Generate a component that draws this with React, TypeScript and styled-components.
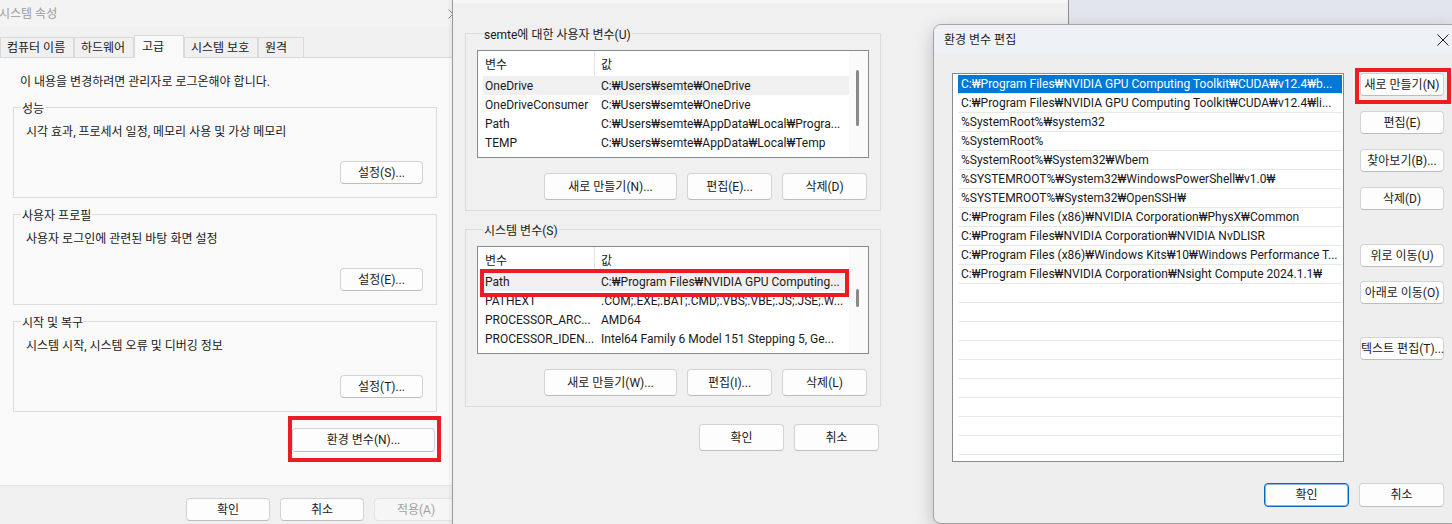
import React from 'react';
import styled, { createGlobalStyle } from 'styled-components';

const GlobalStyle = createGlobalStyle`
  html, body {
    margin: 0;
    padding: 0;
  }
  body {
    font-family: Roboto, "Noto Sans CJK KR", sans-serif;
    font-size: 12px;
    color: #1a1a1a;
  }
  * {
    box-sizing: border-box;
  }
`;

// desktop canvas that holds the three overlapping dialogs
const Desktop = styled.div`
  position: relative;
  width: 1452px;
  height: 524px;
  overflow: hidden;
  background: linear-gradient(180deg, #e2e5ed 0%, #e8eaf0 100%);
`;

const Win = styled.div<{ $x: number; $y: number; $w: number; $h: number; $z: number }>`
  position: absolute;
  left: ${(p) => p.$x}px;
  top: ${(p) => p.$y}px;
  width: ${(p) => p.$w}px;
  height: ${(p) => p.$h}px;
  z-index: ${(p) => p.$z};
  display: flex;
  flex-direction: column;
  overflow: hidden;
`;

const Btn = styled.button<{ $w: number; $h?: number; $primary?: boolean }>`
  flex: none;
  width: ${(p) => p.$w}px;
  height: ${(p) => p.$h ?? 23}px;
  padding: 0;
  font: inherit;
  line-height: 1;
  white-space: nowrap;
  color: #1b1b1b;
  background: #fdfdfd;
  border: 1px solid ${(p) => (p.$primary ? '#0067c0' : '#d3d3d3')};
  border-bottom-color: ${(p) => (p.$primary ? '#0067c0' : '#bdbdbd')};
  box-shadow: ${(p) => (p.$primary ? 'inset 0 0 0 1px rgba(0, 103, 192, 0.45)' : 'none')};
  border-radius: 4px;

  &:disabled {
    color: #a2a2a2;
    background: #f6f6f6;
    border-color: #e2e2e2;
  }
`;

// red annotation frame drawn over a control
const Highlight = styled.span<{ $t: number; $r: number; $b: number; $l: number }>`
  position: absolute;
  top: ${(p) => p.$t}px;
  right: ${(p) => p.$r}px;
  bottom: ${(p) => p.$b}px;
  left: ${(p) => p.$l}px;
  border: 4px solid #ed1c24;
  pointer-events: none;
  z-index: 5;
`;

const Marked = styled.div<{ $mt?: number; $ml?: number }>`
  position: relative;
  flex: none;
  display: flex;
  margin-top: ${(p) => p.$mt ?? 0}px;
  margin-left: ${(p) => p.$ml ?? 0}px;
`;

const CloseIcon = ({ size, color }: { size: number; color: string }) => (
  <svg width={size} height={size} viewBox={`0 0 ${size} ${size}`} fill="none">
    <path d={`M0.5 0.5L${size - 0.5} ${size - 0.5}M${size - 0.5} 0.5L0.5 ${size - 0.5}`} stroke={color} strokeWidth="1" />
  </svg>
);

/* ---------- 시스템 속성 ---------- */

const PropsWindow = styled(Win)`
  background: #f0f0f0;
`;

const PropsTitleBar = styled.div`
  flex: none;
  height: 27px;
  display: flex;
  align-items: center;
  justify-content: space-between;
  padding: 0 18px 0 0;
  background: #f3f3f3;
  color: #9c9c9c;

  & > span {
    margin-left: -1px;
    line-height: 16px;
  }
`;

const TabStrip = styled.div`
  flex: none;
  height: 30px;
  display: flex;
  align-items: flex-end;
  background: #f0f0f0;
`;

const Tab = styled.div<{ $w: number; $active?: boolean }>`
  position: relative;
  z-index: ${(p) => (p.$active ? 2 : 1)};
  width: ${(p) => p.$w}px;
  height: ${(p) => (p.$active ? 23 : 20)}px;
  margin-bottom: ${(p) => (p.$active ? -1 : 0)}px;
  padding: ${(p) => (p.$active ? '3px 0 0 7px' : '2px 0 0 6px')};
  border: 1px solid #d9d9d9;
  border-bottom: none;
  background: ${(p) => (p.$active ? '#f9f9f9' : '#f0f0f0')};
  line-height: 16px;
  white-space: nowrap;
`;

const TabPanel = styled.div`
  flex: none;
  height: 428px;
  display: flex;
  flex-direction: column;
  align-items: flex-start;
  padding-left: 13px;
  background: #f9f9f9;
  border-top: 1px solid #d9d9d9;
`;

const Notice = styled.div`
  margin: 16px 0 0 7px;
  line-height: 16px;
`;

const Group = styled.div<{ $mt: number }>`
  flex: none;
  display: flex;
  flex-direction: column;
  margin-top: ${(p) => p.$mt}px;
  border: 1px solid #dcdcdc;
  background: inherit;
`;

const SettingsGroup = styled(Group)`
  width: 424px;
  height: 91px;
  padding: 0 13px 0 0;
`;

const GroupLabel = styled.span<{ $ml: number }>`
  align-self: flex-start;
  margin: -9px 0 0 ${(p) => p.$ml}px;
  padding: 2px 1px 0;
  line-height: 16px;
  background: inherit;
  white-space: nowrap;
`;

const GroupText = styled.div`
  margin: 7px 0 0 12px;
  line-height: 16px;
`;

const GroupButton = styled(Btn)`
  align-self: flex-end;
  margin-top: 21px;
`;

const PropsFooter = styled.div`
  flex: 1;
  display: flex;
  gap: 10px;
  padding: 12px 0 0 186px;
  border-top: 1px solid #e3e3e3;
  background: #f0f0f0;
`;

/* ---------- 환경 변수 ---------- */

const EnvWindow = styled(Win)`
  background: #f0f0f0;
  border-left: 1px solid #9b9b9b;
  border-right: 1px solid #8e8e8e;
  box-shadow: -2px 0 4px rgba(0, 0, 0, 0.06);
`;

const EnvTitleBar = styled.div`
  flex: none;
  height: 30px;
  background: #f6f6f6;
`;

const EnvBody = styled.div`
  display: flex;
  flex-direction: column;
  padding: 30px 0 0 12px;
  background: inherit;
`;

const VarGroup = styled(Group)`
  width: 416px;
  padding: 0 11px 10px 11px;
`;

const ListBox = styled.div<{ $mt: number }>`
  flex: none;
  width: 392px;
  height: 108px;
  margin-top: ${(p) => p.$mt}px;
  display: flex;
  border: 1px solid #868a91;
  background: #ffffff;
  overflow: hidden;
`;

const ListMain = styled.div`
  flex: 1;
  display: flex;
  flex-direction: column;
  padding-left: 5px;
`;

const ListHeader = styled.div`
  flex: none;
  height: 25px;
  display: grid;
  grid-template-columns: 111px 1fr;
  align-items: stretch;
`;

const HeadCell = styled.div<{ $first?: boolean }>`
  display: flex;
  align-items: center;
  padding-left: ${(p) => (p.$first ? 2 : 6)}px;
  border-left: ${(p) => (p.$first ? 'none' : '1px solid #e5e5e5')};
`;

const ListRow = styled.div<{ $sel?: boolean }>`
  position: relative;
  flex: none;
  height: 19px;
  display: grid;
  grid-template-columns: 111px 1fr;
  background: ${(p) => (p.$sel ? '#f0f0f0' : 'transparent')};
`;

const Cell = styled.div<{ $first?: boolean }>`
  padding: 1px 0 0 ${(p) => (p.$first ? 2 : 7)}px;
  line-height: 18px;
  white-space: nowrap;
  overflow: hidden;
`;

const ScrollTrack = styled.div`
  flex: none;
  width: 19px;
  background: #fafafa;
  padding-left: 7px;
`;

const ScrollThumb = styled.div<{ $top: number; $len: number }>`
  width: 3px;
  height: ${(p) => p.$len}px;
  margin-top: ${(p) => p.$top}px;
  border-radius: 2px;
  background: #8a8a8a;
`;

const ButtonRow = styled.div<{ $mt: number; $pr: number }>`
  flex: none;
  display: flex;
  justify-content: flex-end;
  gap: 10px;
  margin-top: ${(p) => p.$mt}px;
  padding-right: ${(p) => p.$pr}px;
`;

const EnvFooter = styled(ButtonRow)`
  width: 416px;
`;

/* ---------- 환경 변수 편집 ---------- */

const EditWindow = styled(Win)`
  background: #eeeeee;
  border: 1px solid #a3a3a3;
  border-radius: 8px;
  box-shadow: 0 6px 18px rgba(0, 0, 0, 0.22);
`;

const EditTitleBar = styled.div`
  flex: none;
  height: 28px;
  display: flex;
  align-items: center;
  justify-content: space-between;
  padding: 1px 9px 0 10px;
  background: #eef2f7;
  line-height: 16px;
`;

const EditBody = styled.div`
  flex: 1;
  display: flex;
  flex-direction: column;
  padding: 20px 14px 0 18px;
`;

const EditTop = styled.div`
  display: flex;
  gap: 16px;
`;

const PathList = styled.div`
  flex: none;
  width: 392px;
  height: 389px;
  padding: 1px 1px 0 5px;
  border: 1px solid #868a91;
  background: #ffffff;
  overflow: hidden;
`;

const PathRow = styled.div<{ $sel?: boolean }>`
  height: 19px;
  padding: 1px 0 0 3px;
  line-height: 17px;
  border-bottom: 1px solid #e8e8e8;
  white-space: nowrap;
  overflow: hidden;
  color: ${(p) => (p.$sel ? '#ffffff' : '#1a1a1a')};
  background: ${(p) => (p.$sel ? '#0078d7' : 'transparent')};
`;

const SideButtons = styled.div`
  flex: none;
  width: 84px;
  display: flex;
  flex-direction: column;
`;

const SideButton = styled(Btn)<{ $mt: number }>`
  margin-top: ${(p) => p.$mt}px;
`;

const EditFooter = styled.div`
  display: flex;
  justify-content: flex-end;
  gap: 10px;
  margin-top: 21px;
`;

const tabs = [
  { label: '컴퓨터 이름', w: 74 },
  { label: '하드웨어', w: 60 },
  { label: '고급', w: 50, active: true },
  { label: '시스템 보호', w: 74 },
  { label: '원격', w: 46 },
];

const userVars = [
  ['OneDrive', 'C:₩Users₩semte₩OneDrive'],
  ['OneDriveConsumer', 'C:₩Users₩semte₩OneDrive'],
  ['Path', 'C:₩Users₩semte₩AppData₩Local₩Progra...'],
  ['TEMP', 'C:₩Users₩semte₩AppData₩Local₩Temp'],
];

const sysVars = [
  ['Path', 'C:₩Program Files₩NVIDIA GPU Computing...'],
  ['PATHEXT', '.COM;.EXE;.BAT;.CMD;.VBS;.VBE;.JS;.JSE;.W...'],
  ['PROCESSOR_ARC...', 'AMD64'],
  ['PROCESSOR_IDEN...', 'Intel64 Family 6 Model 151 Stepping 5, Ge...'],
];

const paths = [
  'C:₩Program Files₩NVIDIA GPU Computing Toolkit₩CUDA₩v12.4₩b...',
  'C:₩Program Files₩NVIDIA GPU Computing Toolkit₩CUDA₩v12.4₩li...',
  '%SystemRoot%₩system32',
  '%SystemRoot%',
  '%SystemRoot%₩System32₩Wbem',
  '%SYSTEMROOT%₩System32₩WindowsPowerShell₩v1.0₩',
  '%SYSTEMROOT%₩System32₩OpenSSH₩',
  'C:₩Program Files (x86)₩NVIDIA Corporation₩PhysX₩Common',
  'C:₩Program Files₩NVIDIA Corporation₩NVIDIA NvDLISR',
  'C:₩Program Files (x86)₩Windows Kits₩10₩Windows Performance T...',
  'C:₩Program Files₩NVIDIA Corporation₩Nsight Compute 2024.1.1₩',
];

const emptyRows = Array.from({ length: 10 }, (_, i) => i);

const sideButtons = [
  { label: '편집(E)', mt: 15 },
  { label: '찾아보기(B)...', mt: 15 },
  { label: '삭제(D)', mt: 15 },
  { label: '위로 이동(U)', mt: 34 },
  { label: '아래로 이동(O)', mt: 14 },
  { label: '텍스트 편집(T)...', mt: 33 },
];

function VarList({
  rows,
  thumbTop,
  thumbLen,
  marked,
}: {
  rows: string[][];
  thumbTop: number;
  thumbLen: number;
  marked?: boolean;
}) {
  return (
    <ListBox $mt={7}>
      <ListMain>
        <ListHeader>
          <HeadCell $first>변수</HeadCell>
          <HeadCell>값</HeadCell>
        </ListHeader>
        {rows.map(([name, value], i) => (
          <ListRow key={name} $sel={i === 0}>
            <Cell $first>{name}</Cell>
            <Cell>{value}</Cell>
            {marked && i === 0 && <Highlight $t={-3} $r={0} $b={-6} $l={-3} />}
          </ListRow>
        ))}
      </ListMain>
      <ScrollTrack>
        <ScrollThumb $top={thumbTop} $len={thumbLen} />
      </ScrollTrack>
    </ListBox>
  );
}

export default function App() {
  return (
    <>
      <GlobalStyle />
      <Desktop>
        {/* 시스템 속성 (뒤쪽) */}
        <PropsWindow $x={0} $y={0} $w={476} $h={540} $z={1}>
          <PropsTitleBar>
            <span>시스템 속성</span>
            <CloseIcon size={10} color="#8c8c8c" />
          </PropsTitleBar>
          <TabStrip>
            {tabs.map((t) => (
              <Tab key={t.label} $w={t.w} $active={t.active}>
                {t.label}
              </Tab>
            ))}
          </TabStrip>
          <TabPanel>
            <Notice>이 내용을 변경하려면 관리자로 로그온해야 합니다.</Notice>
            <SettingsGroup $mt={17}>
              <GroupLabel $ml={7}>성능</GroupLabel>
              <GroupText>시각 효과, 프로세서 일정, 메모리 사용 및 가상 메모리</GroupText>
              <GroupButton $w={83}>설정(S)...</GroupButton>
            </SettingsGroup>
            <SettingsGroup $mt={16}>
              <GroupLabel $ml={7}>사용자 프로필</GroupLabel>
              <GroupText>사용자 로그인에 관련된 바탕 화면 설정</GroupText>
              <GroupButton $w={83}>설정(E)...</GroupButton>
            </SettingsGroup>
            <SettingsGroup $mt={16}>
              <GroupLabel $ml={7}>시작 및 복구</GroupLabel>
              <GroupText>시스템 시작, 시스템 오류 및 디버깅 정보</GroupText>
              <GroupButton $w={83}>설정(T)...</GroupButton>
            </SettingsGroup>
            <Marked $mt={16} $ml={279}>
              <Btn $w={143} $h={24}>환경 변수(N)...</Btn>
              <Highlight $t={-12} $r={-6} $b={-10} $l={-4} />
            </Marked>
          </TabPanel>
          <PropsFooter>
            <Btn $w={84}>확인</Btn>
            <Btn $w={84}>취소</Btn>
            <Btn $w={84} disabled>
              적용(A)
            </Btn>
          </PropsFooter>
        </PropsWindow>

        {/* 환경 변수 */}
        <EnvWindow $x={452} $y={-27} $w={617} $h={560} $z={2}>
          <EnvTitleBar />
          <EnvBody>
            <VarGroup $mt={0}>
              <GroupLabel $ml={6}>semte에 대한 사용자 변수(U)</GroupLabel>
              <VarList rows={userVars} thumbTop={19} thumbLen={56} />
              <ButtonRow $mt={15} $pr={2}>
                <Btn $w={133} $h={27}>새로 만들기(N)...</Btn>
                <Btn $w={85} $h={27}>편집(E)...</Btn>
                <Btn $w={85} $h={27}>삭제(D)</Btn>
              </ButtonRow>
            </VarGroup>
            <VarGroup $mt={18}>
              <GroupLabel $ml={6}>시스템 변수(S)</GroupLabel>
              <VarList rows={sysVars} thumbTop={42} thumbLen={18} marked />
              <ButtonRow $mt={15} $pr={2}>
                <Btn $w={133} $h={27}>새로 만들기(W)...</Btn>
                <Btn $w={85} $h={27}>편집(I)...</Btn>
                <Btn $w={85} $h={27}>삭제(L)</Btn>
              </ButtonRow>
            </VarGroup>
            <EnvFooter $mt={17} $pr={2}>
              <Btn $w={85} $h={27}>확인</Btn>
              <Btn $w={85} $h={27}>취소</Btn>
            </EnvFooter>
          </EnvBody>
        </EnvWindow>

        {/* 환경 변수 편집 (앞쪽) */}
        <EditWindow $x={933} $y={24} $w={526} $h={500} $z={3}>
          <EditTitleBar>
            <span>환경 변수 편집</span>
            <CloseIcon size={12} color="#1a1a1a" />
          </EditTitleBar>
          <EditBody>
            <EditTop>
              <PathList>
                {paths.map((p, i) => (
                  <PathRow key={p} $sel={i === 0}>
                    {p}
                  </PathRow>
                ))}
                {emptyRows.map((i) => (
                  <PathRow key={`empty-${i}`} />
                ))}
              </PathList>
              <SideButtons>
                <Marked>
                  <Btn $w={84}>새로 만들기(N)</Btn>
                  <Highlight $t={-5} $r={-7} $b={-8} $l={-5} />
                </Marked>
                {sideButtons.map((b) => (
                  <SideButton key={b.label} $w={84} $mt={b.mt}>
                    {b.label}
                  </SideButton>
                ))}
              </SideButtons>
            </EditTop>
            <EditFooter>
              <Btn $w={85} $h={24} $primary>
                확인
              </Btn>
              <Btn $w={85} $h={24}>
                취소
              </Btn>
            </EditFooter>
          </EditBody>
        </EditWindow>
      </Desktop>
    </>
  );
}
